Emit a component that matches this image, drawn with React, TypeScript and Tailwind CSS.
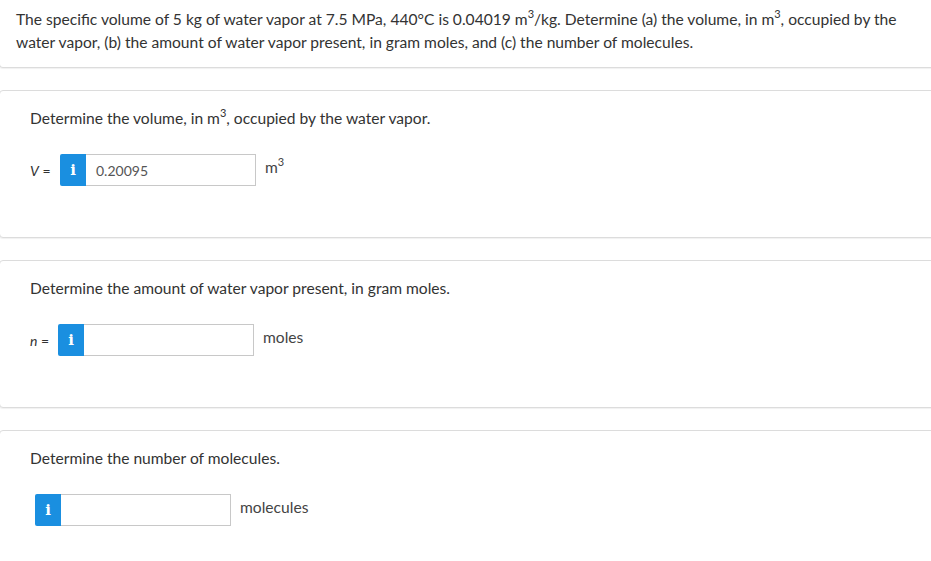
import React from 'react'

const FONT = { fontFamily: 'Lato, "Open Sans", sans-serif' }

function Sup({ children }: { children: React.ReactNode }) {
  return <span className="relative top-[-7px] text-[11px] leading-none">{children}</span>
}

function InfoInput({ label, labelW = 'w-[30px]', value, unit }: { label?: React.ReactNode; labelW?: string; value?: string; unit: React.ReactNode }) {
  return (
    <div className="flex items-center h-8">
      {label && <span className={`text-[14px] text-[#333] shrink-0 ${labelW}`}>{label}</span>}
      <div className="flex h-8">
        <div className="w-[26px] h-8 bg-[#1a8fe0] rounded-l-[2px] flex items-center justify-center text-white text-[15px] font-bold" style={{ fontFamily: '"DejaVu Serif", serif' }}>
          i
        </div>
        <div className="w-[170px] h-8 border border-[#c8c8c8] border-l-0 flex items-center pl-[10px] text-[14px] text-[#555]">
          {value}
        </div>
      </div>
      <span className="ml-[9px] text-[15.6px] text-[#444] self-start mt-[2px]">{unit}</span>
    </div>
  )
}

function Card({ question, children }: { question: React.ReactNode; children: React.ReactNode }) {
  return (
    <div className="ml-[-1px] mr-[-6px] h-[148px] border border-[#dcdcdc] rounded-[4px] bg-white shadow-[0_1px_1px_rgba(0,0,0,0.06)] pl-[30px] pt-[16px]">
      <p className="text-[15.6px] text-[#333] leading-[23px]">{question}</p>
      <div className="mt-[24px]">{children}</div>
    </div>
  )
}

export default function App() {
  return (
    <div className="w-[931px] h-[561px] overflow-hidden bg-white" style={FONT}>
      <div className="ml-[-1px] mr-[-6px] border border-t-0 border-[#dcdcdc] rounded-b-[4px] pl-[16px] pr-[14px] pt-[8px] pb-[13px] shadow-[0_1px_1px_rgba(0,0,0,0.06)]">
        <p className="text-[15.6px] text-[#333] leading-[23px]">
          The specific volume of 5 kg of water vapor at 7.5 MPa, 440°C is 0.04019 m<Sup>3</Sup>/kg. Determine (a) the volume, in m<Sup>3</Sup>, occupied by the water vapor, (b) the amount of water vapor present, in gram moles, and (c) the number of molecules.
        </p>
      </div>
      <div className="mt-[22px] flex flex-col gap-[22px]">
        <Card question={<>Determine the volume, in m<Sup>3</Sup>, occupied by the water vapor.</>}>
          <InfoInput label={<><i>V</i> =</>} value="0.20095" unit={<>m<Sup>3</Sup></>} />
        </Card>
        <Card question="Determine the amount of water vapor present, in gram moles.">
          <InfoInput label={<><i>n</i> =</>} labelW="w-[28px]" unit="moles" />
        </Card>
        <Card question="Determine the number of molecules.">
          <div className="ml-[5px]">
            <InfoInput unit="molecules" />
          </div>
        </Card>
      </div>
    </div>
  )
}
